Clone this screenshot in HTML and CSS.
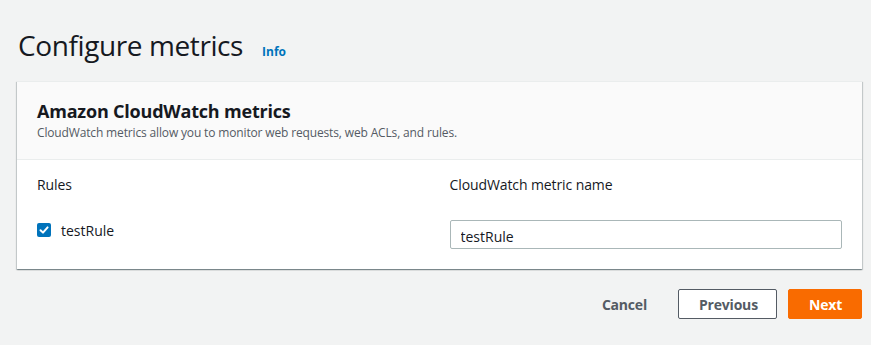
FILE: index.html
```html
<!DOCTYPE html>
<html lang="en">
<head>
    <meta charset="UTF-8">
    <meta name="viewport" content="width=device-width, initial-scale=1.0">
    <title>Configure metrics</title>
    <link rel="stylesheet" href="styles.css">
</head>
<body>

<div class="page">
    <div class="page-header">
        <h1>Configure metrics</h1>
        <a href="#" class="info-link">Info</a>
    </div>

    <div class="container">
        <div class="container-header">
            <h2>Amazon CloudWatch metrics</h2>
            <p class="description">CloudWatch metrics allow you to monitor web requests, web ACLs, and rules.</p>
        </div>
        <div class="container-body">
            <div class="col-label">Rules</div>
            <div class="col-label">CloudWatch metric name</div>

            <label class="rule-check">
                <span class="checkbox">
                    <svg width="14" height="14" viewBox="0 0 14 14">
                        <polyline points="3.5,7.2 6,9.6 10.6,4.4" fill="none" stroke="#fff" stroke-width="2" stroke-linecap="round" stroke-linejoin="round"/>
                    </svg>
                </span>
                testRule
            </label>
            <input type="text" class="metric-input" value="testRule">
        </div>
    </div>

    <div class="actions">
        <button class="btn btn-link">Cancel</button>
        <button class="btn btn-normal">Previous</button>
        <button class="btn btn-primary">Next</button>
    </div>
</div>

</body>
</html>
```

FILE: styles.css
```css
body {
    margin: 0;
    background: #f2f3f3;
    font-family: 'Open Sans', 'Liberation Sans', sans-serif;
    color: #16191f;
}
.page {
    padding: 0 9px 0 17px;
}
.page-header {
    display: flex;
    align-items: baseline;
    padding-top: 27px;
}
.page-header h1 {
    margin: 0;
    font-size: 28px;
    line-height: 36px;
    font-weight: 400;
    letter-spacing: -0.4px;
    padding-left: 1px;
}
.info-link {
    margin-left: 19px;
    font-size: 12px;
    font-weight: 700;
    color: #0073bb;
    text-decoration: none;
}
.container {
    margin-top: 18px;
    background: #fff;
    border-top: 1px solid #eaeded;
    box-shadow: 0 1px 1px 0 rgba(0, 28, 36, 0.3), 1px 1px 1px 0 rgba(0, 28, 36, 0.15), -1px 1px 1px 0 rgba(0, 28, 36, 0.15);
}
.container-header {
    background: #fafafa;
    border-bottom: 1px solid #eaeded;
    padding: 18px 20px 18px 20px;
}
.container-header h2 {
    margin: 0;
    font-size: 18px;
    line-height: 22px;
    font-weight: 700;
    letter-spacing: -0.2px;
}
.description {
    margin: 3px 0 0 0;
    font-size: 12px;
    line-height: 16px;
    letter-spacing: -0.15px;
    color: #545b64;
}
.container-body {
    display: grid;
    grid-template-columns: 1fr 1fr;
    column-gap: 20px;
    row-gap: 25px;
    padding: 15px 20px 20px 20px;
}
.col-label {
    font-size: 14px;
    line-height: 20px;
    letter-spacing: -0.1px;
}
.rule-check {
    display: flex;
    align-items: center;
    height: 20px;
    font-size: 14px;
}
.checkbox {
    width: 14px;
    height: 14px;
    border-radius: 2px;
    background: #0073bb;
    margin-right: 10px;
    display: flex;
}
.metric-input {
    box-sizing: border-box;
    width: 100%;
    height: 29px;
    margin: 0;
    padding: 4px 10px 0 10px;
    border: 1px solid #aab7b8;
    border-radius: 2px;
    font-family: inherit;
    font-size: 14px;
    color: #16191f;
}
.actions {
    display: flex;
    justify-content: flex-end;
    margin-top: 20px;
}
.btn {
    box-sizing: border-box;
    height: 30px;
    padding: 0 20px;
    border-radius: 2px;
    font-family: inherit;
    font-size: 14px;
    font-weight: 700;
    color: #545b64;
    letter-spacing: -0.2px;
    cursor: pointer;
}
.btn-link {
    background: none;
    border: 1px solid transparent;
    margin-right: 10px;
}
.btn-normal {
    background: #fff;
    border: 1px solid #545b64;
    width: 99px;
    margin-right: 11px;
}
.btn-primary {
    background: #f96b00;
    border: 1px solid #f96b00;
    color: #fff;
    width: 74px;
}
```
